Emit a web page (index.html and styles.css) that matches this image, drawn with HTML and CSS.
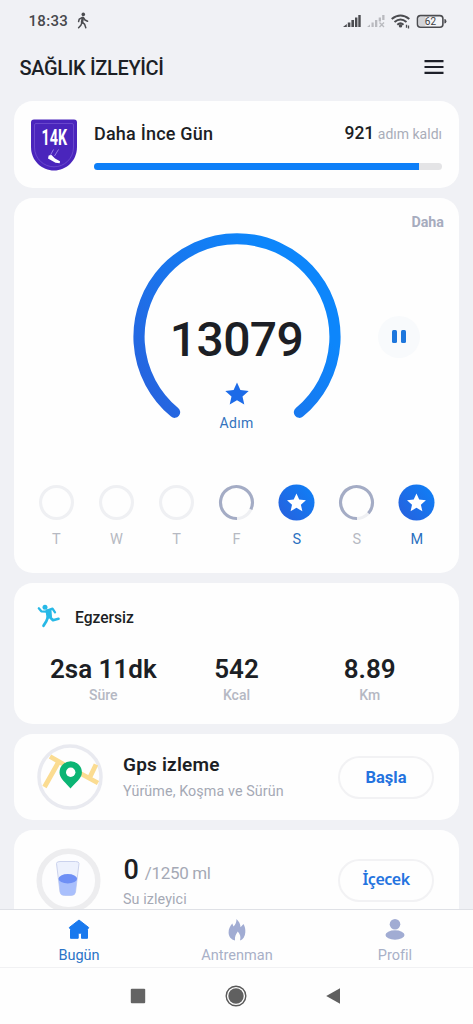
FILE: index.html
```html
<!DOCTYPE html>
<html lang="tr">
<head>
<meta charset="utf-8">
<meta name="viewport" content="width=device-width">
<title>Sağlık İzleyici</title>
<link rel="stylesheet" href="styles.css">
</head>
<body>
<svg width="0" height="0" class="defs">
  <defs>
    <linearGradient id="blue" x1="0" y1="1" x2="1" y2="0.2"><stop offset="0" stop-color="#285fdc"/><stop offset="0.9" stop-color="#127bf3"/></linearGradient>
    <linearGradient id="arc" gradientUnits="userSpaceOnUse" x1="20" y1="180" x2="170" y2="70"><stop offset="0" stop-color="#2763de"/><stop offset="1" stop-color="#0d86fb"/></linearGradient>
    <path id="star" d="M12 0.5 L15.4 8 L23.7 8.900 L17.500 14.400 L19.300 22.500 L12 18.300 L4.700 22.500 L6.500 14.400 L0.300 8.900 L8.600 8 Z"/>
  </defs>
</svg>
<div class="screen">
  <header class="status">
    <span class="clock">18:33</span>
    <svg class="walk" width="12" height="18" viewBox="0 0 12 18" fill="none" stroke="#4b4c50" stroke-linecap="round" stroke-linejoin="round">
      <circle cx="6.300" cy="2.400" r="1.800" fill="#4b4c50" stroke="none"/>
      <path stroke-width="2.500" d="M5.800 6 5 10.200"/>
      <path stroke-width="1.500" d="M5.500 5.500 2.200 7.200 1.600 9.600M6.500 5.600 8 8 10.600 9.200M5 10.500 3.900 13.300 1.600 15.700M5.400 10.200 7.700 12.400 8.800 15.700"/>
    </svg>
    <svg class="icons" width="105" height="18" viewBox="0 0 105 18">
      <path fill="#4b4c50" d="M0 15 3.800 12V15ZM4.800 10.500H7.400V15H4.800ZM8.400 8H11v7H8.400ZM12 5.500H14.400V15H12ZM15.300 3H17.700V15H15.300Z"/>
      <path fill="#b9babf" d="M24 15 27 12.500V15ZM28.500 10.500h2.200V15h-2.200ZM32 8h2.300v7H32ZM35.700 5.500H38v4h-2.300ZM39.200 3h2.300v5H39.200Z"/>
      <path stroke="#b9babf" stroke-width="1.400" d="M36.500 10.500 41 15M41 10.500 36.500 15"/>
      <g fill="none" stroke="#4b4c50" stroke-width="2">
        <path d="M48.700 7Q57.500 0 66.300 7M51.500 10Q57.500 5 63.500 10M54.300 12.700Q57.500 10 60.500 12.700"/>
      </g>
      <circle cx="57.500" cy="13.900" r="1.700" fill="#4b4c50"/>
      <path stroke="#4b4c50" stroke-width="1.300" d="M63.500 12.700v3M65.500 13.500v3"/>
      <rect x="74.500" y="3.600" width="25.400" height="11.600" rx="3" fill="#f4f5f8" stroke="#4b4c50" stroke-width="1.600"/>
      <rect x="75.700" y="4.800" width="7" height="9.200" rx="1.500" fill="#d3d4d8"/>
      <path fill="#4b4c50" d="M101.400 7q2 0 2 2.200t-2 2.200Z"/>
      <text x="87.400" y="13" text-anchor="middle" class="battery">62</text>
    </svg>
  </header>
  <div class="titlebar">
    <h1>SAĞLIK İZLEYİCİ</h1>
    <svg width="20" height="16" viewBox="0 0 20 16"><path stroke="#1d2029" stroke-width="2.200" d="M0.500 2.100h19M0.500 8h19M0.500 13.900h19"/></svg>
  </div>

  <main class="cards">
    <section class="card goal">
      <svg width="48" height="52" viewBox="0 0 48 52">
        <path fill="#4a25bc" d="M4 .5H44Q47 .5 47 3.500V28C47 42 36 51.500 24 51.500S1 42 1 28V3.500Q1 .5 4 .5Z"/>
        <path fill="none" stroke="#7150d0" stroke-width=".8" d="M6 4.500H42Q43.500 4.500 43.500 6V28C43.500 40 34 47.800 24 47.800S4.500 40 4.500 28V6Q4.500 4.500 6 4.500Z"/>
        <text x="37.500" y="26.500" text-anchor="middle" transform="scale(.65 1)" class="badge">14K</text>
        <path stroke="#a894ea" stroke-width=".8" fill="none" d="M23.500 30.500 20 37M28.500 30.500 24.500 37"/>
        <path fill="#fff" d="M18.700 36.500 21.500 36 25 39.500 30 42.200 29.700 44.300 25.500 43.700 18 39.500Z"/>
      </svg>
      <div class="goal-body">
        <div class="goal-row"><span class="goal-name">Daha İnce Gün</span><span class="left"><b>921</b> adım kaldı</span></div>
        <div class="track"><div class="fill" style="width:93.4%"></div></div>
      </div>
    </section>

    <section class="card steps">
      <div class="more">Daha</div>
      <div class="dial-row">
        <div class="dial">
          <svg class="ring" width="208" height="190" viewBox="0 0 208 190"><path fill="none" stroke="url(#arc)" stroke-width="11.200" stroke-linecap="round" d="M41.600 179.300A98 98 0 1 1 166.400 179.300"/></svg>
          <div class="dial-text">
            <div class="count">13079</div>
            <svg width="24" height="24" viewBox="0 0 24 24"><use href="#star" fill="#1c6be8"/></svg>
            <div class="unit">Adım</div>
          </div>
        </div>
        <div class="pause"><i></i><i></i></div>
      </div>
      <div class="week">
        <div class="day"><svg viewBox="0 0 38 38"><circle class="empty" cx="19" cy="19" r="16.400"/></svg>T</div>
        <div class="day"><svg viewBox="0 0 38 38"><circle class="empty" cx="19" cy="19" r="16.400"/></svg>W</div>
        <div class="day"><svg viewBox="0 0 38 38"><circle class="empty" cx="19" cy="19" r="16.400"/></svg>T</div>
        <div class="day"><svg viewBox="0 0 38 38"><circle class="empty" cx="19" cy="19" r="16.400"/><path class="part" d="M19.500 35.400A16.400 16.400 0 1 1 33.800 26"/></svg>F</div>
        <div class="day done"><svg viewBox="0 0 38 38"><circle cx="19" cy="19" r="18.500" fill="url(#blue)"/><use href="#star" fill="#fff" transform="translate(9 9.300) scale(.83)"/></svg>S</div>
        <div class="day"><svg viewBox="0 0 38 38"><circle class="empty" cx="19" cy="19" r="16.400"/><path class="part" d="M19.500 35.400A16.400 16.400 0 1 1 31.200 30"/></svg>S</div>
        <div class="day done"><svg viewBox="0 0 38 38"><circle cx="19" cy="19" r="18.500" fill="url(#blue)"/><use href="#star" fill="#fff" transform="translate(9 9.300) scale(.83)"/></svg>M</div>
      </div>
    </section>

    <section class="card exercise">
      <div class="ex-head">
        <svg width="24" height="24" viewBox="0 0 24 24" fill="none" stroke="#27b8e6" stroke-linejoin="round" stroke-linecap="round">
          <circle cx="8" cy="3.200" r="2.500" fill="#27b8e6" stroke="none"/>
          <path stroke-width="2.300" d="M1.800 4.300 4.300 7.300 10 7.700M10 6.500 15.500 4.700 18 8.300"/>
          <path fill="#27b8e6" stroke-width="2" d="M9.500 6.500 13.500 6.500 14 12.500 10.500 13.500Z"/>
          <path stroke-width="2.700" d="M12.500 12.800 16 16.200 21.500 14.800M10.800 13.500 9.300 17.300 6.500 21.800"/>
        </svg>
        <span>Egzersiz</span>
      </div>
      <div class="stats">
        <div><b>2sa 11dk</b><span>Süre</span></div>
        <div><b>542</b><span>Kcal</span></div>
        <div><b>8.89</b><span>Km</span></div>
      </div>
    </section>

    <section class="card action">
      <svg class="pic" width="68" height="68" viewBox="0 0 68 68">
        <circle cx="34" cy="34" r="31" fill="#fefefe" stroke="#e9eaf0" stroke-width="3.500"/>
        <path fill="none" stroke="#fbdc91" stroke-width="4.800" d="M14 13.500 28 21.500 62 40M22 20 8.500 44M60 21.500 54 34"/>
        <path fill="#0bb574" d="M34.500 45.500C30 40 23.500 35.500 23.500 29.500A11.200 11.200 0 0 1 45.900 29.500C45.900 35.500 39 40 34.500 45.500Z"/>
        <circle cx="34.700" cy="29.300" r="4.700" fill="#fff"/>
      </svg>
      <div class="action-text"><h2>Gps izleme</h2><p class="desc">Yürüme, Koşma ve Sürün</p></div>
      <button>Başla</button>
    </section>

    <section class="card action water">
      <svg class="pic" width="68" height="68" viewBox="0 0 68 68">
        <circle cx="32.500" cy="33.500" r="29.300" fill="#fdfdfe" stroke="#ededef" stroke-width="5.500"/>
        <g transform="translate(-2 -2)">
          <path fill="#edf1fd" stroke="#cbd2ed" stroke-width="1" d="M22.500 18.500Q22.500 16.500 26 16.500H41.500Q45 16.500 45 18.500L41.500 47Q41 50.500 37 50.500H30.500Q26.500 50.500 26 47Z"/>
          <path fill="#a9bffc" d="M24.500 34H43L41.500 47Q41 50.500 37 50.500H30.500Q26.500 50.500 26 47Z"/>
          <ellipse cx="33.800" cy="33.800" rx="9.300" ry="4.700" fill="#6e8ff5"/>
        </g>
      </svg>
      <div class="action-text"><div class="amount"><b>0</b><span>/1250 ml</span></div><p>Su izleyici</p></div>
      <button class="drink">İçecek</button>
    </section>
  </main>

  <nav class="tabs">
    <div class="tab active"><svg width="22" height="22" viewBox="0 0 22 22"><path fill="#1979ee" stroke="#1979ee" stroke-linejoin="round" d="M11 1 20.700 8.500 19.500 10.500V19.300H13.500V15Q13.500 14.200 12.700 14.200H11Q10.200 14.200 10.200 15V19.300H2.500V10.500L1.300 8.500Z"/></svg>Bugün</div>
    <div class="tab"><svg width="22" height="22" viewBox="0 0 22 22"><path fill="#a1acd3" d="M10.500 0C13 2.500 14.500 5 14.500 8.200L17.500 5C19 8 19.500 10 19.300 13.500 19 17.500 17 20.500 14 21.500 15 18 14.300 15.500 11.800 12.500 10 15 8.500 17.500 9 21.500 5 20.500 2.600 17.500 2.600 13.500 2.600 9.500 4 7.500 6.300 4.500L7.500 7.500C9.500 5.500 10.500 3 10.500 0Z"/></svg>Antrenman</div>
    <div class="tab"><svg width="22" height="22" viewBox="0 0 22 22"><circle cx="11" cy="5.300" r="5.300" fill="#a1acd3"/><ellipse cx="11" cy="16" rx="9.500" ry="4.700" fill="#a1acd3"/></svg>Profil</div>
  </nav>
  <footer class="system">
    <svg width="16" height="16" viewBox="0 0 16 16"><rect x=".8" y=".8" width="14.400" height="14.400" rx="1" fill="#646464"/></svg>
    <svg width="22" height="22" viewBox="0 0 22 22"><circle cx="11" cy="11" r="9.800" fill="none" stroke="#5a5a5a" stroke-width="1.400"/><circle cx="11" cy="11" r="7.700" fill="#606060"/></svg>
    <svg width="16" height="16" viewBox="0 0 16 16"><path fill="#606060" d="M1.200 8 15 .3V15.700Z"/></svg>
  </footer>
</div>
</body>
</html>
```
FILE: styles.css
```css
* { box-sizing: border-box; margin: 0; }
body { background: #f0f1f5; font-family: Roboto, sans-serif; color: #1c1f25; }
svg { display: block; flex: none; }
.defs { position: absolute; }
.screen { width: 473px; height: 1024px; display: flex; flex-direction: column; overflow: hidden; }
b, h1, h2 { font-weight: 500; }

.status { height: 40px; padding: 12px 24px 0 28.5px; display: flex; flex: none; }
.clock { font-size: 15px; line-height: 18px; font-weight: 500; color: #47484c; letter-spacing: 0.3px; width: 48.5px; }
.icons { margin: 0 0 0 auto; }
.status .icons { margin-right: 1px; }
.battery { font-size: 10px; fill: #3d3e42; }

.titlebar { height: 61px; flex: none; display: flex; justify-content: space-between; padding: 15.5px 29px 0 19.5px; }
.titlebar h1 { font-size: 20px; line-height: 24px; letter-spacing: -0.35px; }
.titlebar svg { margin-top: 3.5px; }

.cards { flex: 1; min-height: 0; overflow: hidden; padding: 0 14px; display: flex; flex-direction: column; gap: 10px; }
.card { background: #fefefe; border-radius: 19px; flex: none; }

.goal { height: 87px; display: flex; padding: 18px 17px 0 16px; gap: 16px; }
.badge { font: 700 22px Roboto, sans-serif; fill: #fff; }
.goal-body { flex: 1; }
.goal-row { display: flex; justify-content: space-between; line-height: 29px; height: 44px; }
.goal-name { font-size: 18px; font-weight: 500; letter-spacing: .2px; }
.left { font-size: 14px; color: #a9adb9; }
.left b { font-size: 17.5px; color: #1c1f25; }
.track { height: 7px; border-radius: 4px; background: #e4e4e6; overflow: hidden; }
.fill { height: 100%; background: #0d7ff8; }

.steps { height: 375px; padding-top: 14px; }
.more { text-align: right; padding-right: 15px; font-size: 14.3px; line-height: 20px; font-weight: 700; color: #a7acbe; }
.dial-row { display: grid; grid-template-columns: 118.5px 208px 1fr; height: 206px; }
.dial { grid-column: 2; display: grid; padding-top: .5px; }
.dial > * { grid-area: 1 / 1; }
.dial-text { display: flex; flex-direction: column; align-items: center; padding-top: 79px; }
.count { font-size: 48px; line-height: 56px; font-weight: 500; height: 70px; letter-spacing: -.6px; }
.unit { font-size: 14px; line-height: 18px; margin-top: 8px; color: #3373bd; letter-spacing: .3px; }
.pause { width: 42px; height: 42px; margin: 83.5px 0 0 37.5px; border-radius: 50%; background: #f8fafc; display: flex; align-items: center; justify-content: center; gap: 4.5px; }
.pause i { width: 4.3px; height: 13px; border-radius: 1.5px; background: #1e77dd; }
.week { display: grid; grid-template-columns: repeat(7, 60.1px); margin: 45.5px 0 0 12.3px; }
.day { display: flex; flex-direction: column; align-items: center; gap: 9px; font-size: 14.5px; line-height: 20px; color: #b6b9c2; }
.day svg { width: 37px; height: 37px; }
.done { color: #2b70c0; }
.empty { fill: none; stroke: #eff0f3; stroke-width: 3.2; }
.part { fill: none; stroke: #a4acc5; stroke-width: 3.2; }

.exercise { height: 141px; padding-top: 21px; }
.ex-head { display: flex; gap: 14px; padding-left: 23px; font-size: 15.6px; line-height: 28px; height: 27px; font-weight: 500; }
.stats { display: grid; grid-template-columns: repeat(3, 133.2px); margin: 22px 0 0 22.7px; text-align: center; }
.stats b { display: block; font-size: 26px; line-height: 32px; font-weight: 600; }
.stats span { display: block; font-size: 14px; line-height: 21px; font-weight: 500; color: #b5b8c3; }

.action { height: 86px; display: flex; align-items: flex-start; padding: 9px 25px 0 22px; }
.action-text { margin-left: 19px; flex: 1; }
.action h2 { font-size: 19px; line-height: 24px; margin-top: 10px; font-weight: 600; letter-spacing: .2px; }
.action p { font-size: 14.3px; line-height: 20px; margin-top: 4px; color: #a5a9b5; letter-spacing: .1px; }
.action button { width: 96px; height: 43px; margin-top: 13px; border-radius: 22px; border: 2.5px solid #f2f2f4; background: #fefefe; color: #2473df; font: 700 16.5px/37px Roboto, sans-serif; padding: 0; }
.water { padding-top: 17px; height: 100px; }
.amount { display: flex; align-items: baseline; gap: 6px; height: 32px; line-height: 32px; margin-top: 7px; }
.amount b { font-size: 27px; margin-left: .5px; }
.amount span { font-size: 17px; color: #a5a9b5; letter-spacing: -.35px; }
.water p { margin-top: 3px; }
.action .drink { margin-top: 12px; font-family: "Noto Sans", sans-serif; font-weight: 600; font-size: 16px; line-height: 35px; letter-spacing: -.5px; padding-bottom: 2px; }

.tabs { height: 59px; flex: none; display: grid; grid-template-columns: repeat(3, 158px); background: #fefefe; border-top: 1px solid #dfe1e6; border-bottom: 1px solid #f1f1f3; }
.tab { display: flex; flex-direction: column; align-items: center; padding-top: 9px; gap: 5px; font-size: 14.5px; line-height: 20px; color: #a8b0c7; }
.active { color: #2a74c7; }
.system { height: 56px; flex: none; background: #fefefe; display: flex; align-items: center; justify-content: space-between; padding: 0 132px 0 130px; }
```
